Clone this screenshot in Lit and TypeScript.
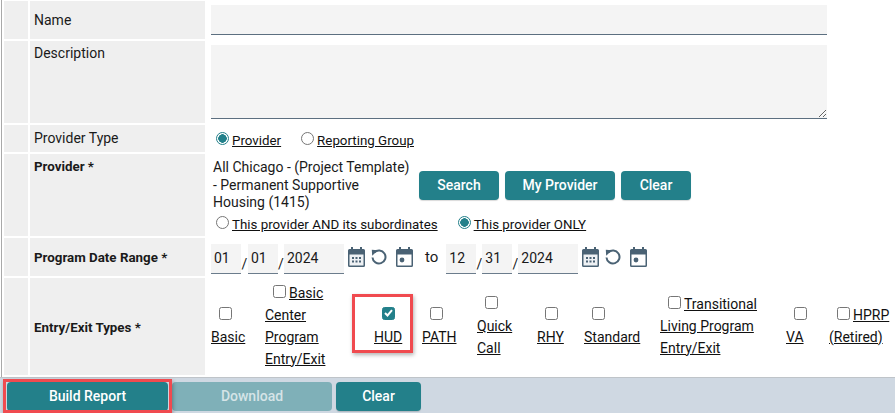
import { LitElement, html, css, svg } from "lit";
import { customElement } from "lit/decorators.js";

const body = "M3 0h2v2h7V0h2v2h1.500A1.500 1.500 0 0 1 17 3.500V18.500A1.500 1.500 0 0 1 15.500 20H1.500A1.500 1.500 0 0 1 0 18.500V3.500A1.500 1.500 0 0 1 1.500 2H3z";
const calGrid = html`<svg class="ico first" width="17" height="20" viewBox="0 0 17 20"><path fill="#4a6274" d=${body}/><rect x="1.500" y="7.500" width="14" height="11" fill="#eef1f4"/><g fill="#4a6274">${[4, 7.5, 11].map((x) => [10, 13.5].map((y) => svg`<rect x="${x}" y="${y}" width="2" height="2"/>`))}</g></svg>`;
const calDot = html`<svg class="ico" width="17" height="20" viewBox="0 0 17 20"><path fill="#4a6274" d=${body}/><rect x="1.500" y="7.500" width="14" height="11" fill="#fff"/><circle cx="6" cy="13" r="2.400" fill="#4a6274"/></svg>`;
const reset = html`<svg class="ico reset" width="16" height="16" viewBox="0 0 16 16"><path fill="none" stroke="#4a6274" stroke-width="2" d="M3.200 3.600A6.500 6.500 0 1 1 1.500 8.500"/><path fill="#4a6274" d="M0.800 0.800L6.800 1.200L1.200 6.800z"/></svg>`;
const tick = html`<svg class="tick" width="9" height="8" viewBox="0 0 9 8"><path fill="none" stroke="#fff" stroke-width="2" d="M1 4l2.500 2.500L8 1.200"/></svg>`;

const dateGroup = (m: string, d: string, y: string, cls: string) => html`
  <span class="date ${cls}">
    <input class="d2" .value=${m} /><i>/</i><input class="d2" .value=${d} /><i>/</i><input class="d4" .value=${y} />
    ${calGrid}${reset}${calDot}
  </span>`;

const entries: { lines: string[]; checked?: boolean }[] = [
  { lines: ["", "Basic"] },
  { lines: ["Basic", "Center", "Program", "Entry/Exit"] },
  { lines: ["", "HUD"], checked: true },
  { lines: ["", "PATH"] },
  { lines: ["", "Quick", "Call"] },
  { lines: ["", "RHY"] },
  { lines: ["", "Standard"] },
  { lines: ["Transitional", "Living Program", "Entry/Exit"] },
  { lines: ["", "VA"] },
  { lines: ["HPRP", "(Retired)"] },
];

@customElement("app-root")
export class AppRoot extends LitElement {
  static styles = css`
    :host {
      display: block;
      width: 895px;
      height: 413px;
      overflow: hidden;
      position: relative;
      background: #fff;
      font-family: Roboto, sans-serif;
      font-size: 14px;
      color: #1a1a1a;
    }
    .form {
      margin-left: 1px;
      border-left: 1px solid #a9a9a9;
      height: 377px;
      padding: 1px 0 0 2px;
      box-sizing: border-box;
      display: grid;
      grid-template-columns: 24px 175px 1fr;
      grid-template-rows: 38px 82px 27px 82px 38px 97px;
      column-gap: 2px;
      row-gap: 2px;
    }
    .stub { background: #efefef; }
    .label { background: #efefef; padding: 11px 0 0 4px; line-height: 16px; }
    .label.top { padding-top: 4px; }
    .label.tight { padding-top: 5px; }
    .label.req { font-weight: 700; font-size: 13.33px; }
    .label.mid { display: flex; align-items: center; padding: 2px 0 0 4px; box-sizing: border-box; }
    .value { padding-left: 4px; min-width: 0; }
    .field {
      display: block;
      border: 0;
      border-bottom: 1px solid #5c6f80;
      background: #f4f4f4;
      width: 616px;
      box-sizing: border-box;
      padding: 0;
      margin: 0;
    }
    .name { height: 30px; margin-top: 4px; }
    .desc-wrap { padding-top: 4px; }
    .desc { height: 74px; resize: vertical; }
    .radios { display: flex; align-items: center; padding: 3px 0 0 9px; height: 27px; box-sizing: border-box; }
    label { color: #111; text-decoration: underline; font-size: 13.33px; }
    input[type="radio"] {
      appearance: none;
      width: 13px;
      height: 13px;
      margin: -4px 3px 0 0;
      border-radius: 50%;
      border: 1px solid #767676;
      box-sizing: border-box;
      background: #fff;
    }
    input[type="radio"]:checked {
      border: 1px solid #23808a;
      background: radial-gradient(circle, #23808a 0 4px, #fff 4.500px);
    }
    input[type="radio"].gap { margin-left: 20px; }
    .prov-row { display: flex; padding-left: 2px; }
    .prov-text { width: 200px; margin-right: 6px; line-height: 17.500px; padding-top: 5px; flex: none; }
    .btns { display: flex; gap: 6px; padding-top: 17px; }
    button {
      height: 29px;
      border: 0;
      border-radius: 4px;
      background: #23808a;
      color: #fff;
      font: 500 14px Roboto, sans-serif;
      padding: 0 0 2px;
      box-shadow: 0 1px 1px rgba(0, 0, 0, 0.15);
    }
    .w80 { width: 80px; }
    .w110 { width: 110px; }
    .w70 { width: 70px; }
    .radios.sub { height: auto; padding: 5px 0 0 5px; }
    .dates { display: flex; align-items: center; height: 38px; }
    .date { display: flex; align-items: center; }
    .date input {
      border: 0;
      border-bottom: 1px solid #6b7c8c;
      background: #f4f4f4;
      height: 30px;
      box-sizing: border-box;
      padding: 0 0 2px 3px;
      margin: 4px 0 0;
      font: 14px Roboto, sans-serif;
      color: #1a1a1a;
      outline: none;
    }
    .d2 { width: 30px; }
    .d4 { width: 60px; }
    .date i { font-style: normal; width: 6px; text-align: center; padding-top: 14px; font-size: 14px; }
    .date.a i:first-of-type { width: 7px; }
    .ico { flex: none; }
    .date .first { margin-left: 4px; }
    .date .reset { margin: 0 9px 0 6px; }
    .to { margin: 0 8px 0 12px; font-size: 15px; }
    .entries {
      display: grid;
      grid-template-columns: 54px 109px 48px 55px 60px 47px 76px 126px 43px 60px;
      align-items: center;
      height: 95px;
    }
    .entry { line-height: 22px; white-space: nowrap; }
    .entry div { height: 22px; }
    .entry span { color: #111; text-decoration: underline; font-size: 14px; }
    .cb { position: relative; display: inline-block; margin: 0 3px 0 8px; width: 13px; height: 13px; vertical-align: 0; }
    input[type="checkbox"] {
      appearance: none;
      display: block;
      width: 13px;
      height: 13px;
      margin: 0;
      border: 1px solid #767676;
      border-radius: 2.500px;
      background: #fff;
      box-sizing: border-box;
    }
    input[type="checkbox"]:checked {
      border-color: #23808a;
      background: #23808a;
    }
    .tick { position: absolute; left: 2px; top: 2.500px; }
    .footer {
      height: 36px;
      box-sizing: border-box;
      background: #cfd8e2;
      border-top: 1px solid #bfc4c9;
      display: flex;
      padding: 4px 0 0 7px;
      gap: 4px;
    }
    .b-build { width: 161px; }
    .b-down { width: 160px; background: #7fb0b8; color: #d5e4e7; box-shadow: none; }
    .b-clear { width: 85px; }
    .mark {
      position: absolute;
      box-sizing: border-box;
      border: 3px solid #f04a4f;
      box-shadow: 1px 2px 4px rgba(0, 0, 0, 0.3);
      pointer-events: none;
    }
    .m-hud { left: 352px; top: 294px; width: 61px; height: 59px; }
    .m-build { left: 3px; top: 379px; width: 169px; height: 34px; }
  `;

  render() {
    return html`
      <div class="form">
        <div class="stub"></div>
        <div class="label">Name</div>
        <div class="value"><input class="field name" /></div>

        <div class="stub"></div>
        <div class="label top">Description</div>
        <div class="value desc-wrap"><textarea class="field desc"></textarea></div>

        <div class="stub"></div>
        <div class="label top tight">Provider Type</div>
        <div class="value radios">
          <input type="radio" name="t" checked /><label>Provider</label>
          <input class="gap" type="radio" name="t" /><label>Reporting Group</label>
        </div>

        <div class="stub"></div>
        <div class="label req tight">Provider *</div>
        <div class="value">
          <div class="prov-row">
            <div class="prov-text">All Chicago - (Project Template) - Permanent Supportive Housing (1415)</div>
            <div class="btns">
              <button class="w80">Search</button>
              <button class="w110">My Provider</button>
              <button class="w70">Clear</button>
            </div>
          </div>
          <div class="radios sub">
            <input type="radio" name="s" /><label>This provider AND its subordinates</label>
            <input class="gap" type="radio" name="s" checked /><label>This provider ONLY</label>
          </div>
        </div>

        <div class="stub"></div>
        <div class="label req mid">Program Date Range *</div>
        <div class="value dates">
          ${dateGroup("01", "01", "2024", "a")}
          <span class="to">to</span>
          ${dateGroup("12", "31", "2024", "b")}
        </div>

        <div class="stub"></div>
        <div class="label req mid">Entry/Exit Types *</div>
        <div class="value entries">
          ${entries.map(
            (e) => html`<div class="entry">
              ${e.lines.map((l, i) =>
                i === 0
                  ? html`<div>
                      <span class="cb"><input type="checkbox" ?checked=${e.checked} />${e.checked ? tick : ""}</span>${l ? html`<span>${l}</span>` : ""}
                    </div>`
                  : html`<div><span>${l}</span></div>`,
              )}
            </div>`,
          )}
        </div>
      </div>
      <div class="footer">
        <button class="b-build">Build Report</button>
        <button class="b-down">Download</button>
        <button class="b-clear">Clear</button>
      </div>
      <div class="mark m-hud"></div>
      <div class="mark m-build"></div>
    `;
  }
}
